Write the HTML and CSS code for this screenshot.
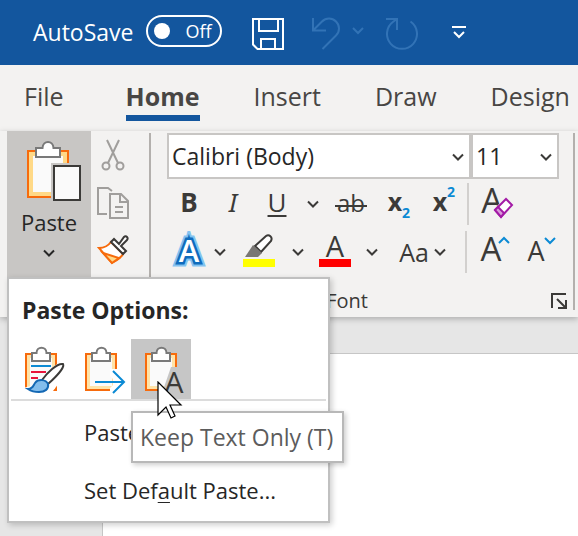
FILE: index.html
```html
<!DOCTYPE html>
<html lang="en">
<head>
    <meta charset="UTF-8">
    <meta name="viewport" content="width=device-width, initial-scale=1.0">
    <title>Document</title>
    <link rel="stylesheet" href="styles.css">
</head>
<body>
    <svg class="defs" width="0" height="0">
        <symbol id="chevron" viewBox="0 0 12 8"><path d="M1 1.5l5 5 5-5" fill="none" stroke="currentColor" stroke-width="2"/></symbol>
        <symbol id="clipboard" viewBox="0 0 60 60">
            <path d="M15 15h30v36H15z" fill="#fafafa" stroke="#f76b0c" stroke-width="2"/>
            <path d="M17.500 17.500h25v31h-25z" fill="none" stroke="#ffe3a8" stroke-width="3"/>
            <path d="M21 14h4.500c0-7 10-7 10 0H39v8H21z" fill="#fff" stroke="#797979" stroke-width="2"/>
        </symbol>
    </svg>

    <header class="titlebar">
        <label for="autosave">AutoSave</label>
        <label class="switch"><input type="checkbox" id="autosave">Off</label>
        <button class="save" aria-label="Save">
            <svg width="32" height="32" fill="none" stroke="currentColor" stroke-width="2"><path d="M1 1h30v30H5.500L1 26.500zM7 1v12h19V1M9 31V21h14v10"/></svg>
        </button>
        <button class="undo" aria-label="Undo" disabled>
            <svg width="54" height="34" fill="none" stroke="currentColor" stroke-width="2"><path d="M1 1v12.500h13M1.500 13L10 4.500c4-4 10-4 14 0s4 10 0 14L10.500 32M41 11l5 5 5-5"/></svg>
        </button>
        <button class="redo" aria-label="Redo" disabled>
            <svg width="32" height="34" fill="none" stroke="currentColor" stroke-width="2"><path d="M0 2h11v11M24.500 4.500a15 15 0 1 1-17 0L11 2"/></svg>
        </button>
        <button aria-label="Customize Quick Access Toolbar">
            <svg width="14" height="14" fill="none" stroke="currentColor" stroke-width="2"><path d="M0 2h14M2 7l5 5 5-5"/></svg>
        </button>
    </header>

    <nav class="tabs">
        <a href="#" class="file">File</a>
        <a href="#" class="active">Home</a>
        <a href="#">Insert</a>
        <a href="#">Draw</a>
        <a href="#">Design</a>
    </nav>

    <section class="ribbon">
        <div class="clipboard-group">
            <button class="paste">
                <svg width="56" height="62">
                    <path d="M1 11h40v46H1z" fill="#fafafa" stroke="#f76b0c" stroke-width="2"/>
                    <path d="M4 14h34v40H4z" fill="none" stroke="#ffd987" stroke-width="4"/>
                    <path d="M9 8h6.500C16 0 26 0 26.500 8H33v9H9z" fill="#fff" stroke="#797979" stroke-width="2"/>
                    <path d="M24 23h32v39H24z" fill="#c8c6c4"/>
                    <path d="M27 26h26v34H27z" fill="#fafafa" stroke="#3b3a38" stroke-width="2"/>
                </svg>
                <span>Paste</span>
                <svg class="chevron"><use href="#chevron"/></svg>
            </button>

            <div class="paste-menu">
                <h2>Paste Options:</h2>
                <div class="options">
                    <button aria-label="Keep Source Formatting">
                        <svg width="60" height="60">
                            <use href="#clipboard"/>
                            <path d="M20 27h20" stroke="#0b8ad4" stroke-width="2"/>
                            <path d="M20 33h15M20 39h7" stroke="#e8153c" stroke-width="2"/>
                            <path d="M50 22L60 28 39 56 12 56 12 49 20 47 27 40z" fill="#fff"/>
                            <path d="M31 41C36 34 46 24 52 25c2 3-6 12-15 20z" fill="#fff" stroke="#3b3a38" stroke-width="2"/>
                            <path d="M17 50c5 0 5-3 7-6 3-4 11-4 13 1 1 5-3 8-9 8-4 0-8-1-11-3z" fill="#83bdec" stroke="#1468b4" stroke-width="2"/>
                        </svg>
                    </button>
                    <button aria-label="Merge Formatting">
                        <svg width="60" height="60">
                            <use href="#clipboard"/>
                            <path d="M39 30h9l8 14v14H39v-9l3-3v-6l-3-3z" fill="#fff"/>
                            <path d="M24 43h29M42 32l11 11-11 11" fill="none" stroke="#0b8ad4" stroke-width="2"/>
                        </svg>
                    </button>
                    <div class="option-hover">
                        <button aria-label="Keep Text Only" aria-describedby="tip">
                            <svg width="60" height="60">
                                <use href="#clipboard"/>
                                <path d="M40 28h8v26H31z" fill="#c6c6c6"/>
                                <text x="43" y="54" class="letter" font-size="30">A</text>
                            </svg>
                        </button>
                        <span class="tooltip" id="tip" role="tooltip">Keep Text Only (T)</span>
                        <svg class="cursor" width="26" height="40"><path d="M1 1v33l8-8 5 11 4-2-5-11h11z" fill="#fff" stroke="#000" stroke-width="1.200"/></svg>
                    </div>
                </div>
                <button class="item">Paste <u>S</u>pecial...</button>
                <button class="item">Set Def<u>a</u>ult Paste...</button>
            </div>
        </div>

        <div class="small-tools">
            <button aria-label="Cut">
                <svg width="32" height="32" fill="none" stroke="#a09e9c" stroke-width="2">
                    <path d="M10 1l11 23M22 1L11 24"/><circle cx="9" cy="27" r="3.500"/><circle cx="23" cy="27" r="3.500"/>
                </svg>
            </button>
            <button aria-label="Copy">
                <svg width="32" height="32" fill="none" stroke="#a09e9c" stroke-width="2">
                    <path d="M10 27H1V1h10l4 3M13 7h11l7 7v17H13zM23 7v8h8M18 20h8M18 25h8"/>
                </svg>
            </button>
            <button aria-label="Format Painter">
                <svg width="32" height="32" stroke-width="2">
                    <path d="M2 13c5 0 9-2 12-6l12 12c-2 4-6 6-11 9z" fill="#fff" stroke="#f76b0c"/>
                    <path d="M6 18l16 5-7 5z" fill="#ffd987" stroke="#f76b0c"/>
                    <path d="M14 7l3-3 5 5 5-7c2-2 5 1 3 3l-6 6 5 5-3 3z" fill="#fff" stroke="#3b3a38"/>
                </svg>
            </button>
        </div>

        <div class="font-group">
            <div class="combos">
                <div class="combo">
                    <select aria-label="Font"><option>Calibri (Body)</option></select>
                    <svg class="chevron"><use href="#chevron"/></svg>
                </div>
                <div class="combo size">
                    <select aria-label="Font size"><option>11</option></select>
                    <svg class="chevron"><use href="#chevron"/></svg>
                </div>
            </div>
            <div class="row">
                <button class="w44 glyph"><b>B</b></button>
                <button class="w44 glyph italic">I</button>
                <button class="w44 glyph underline">U</button>
                <button class="w28" aria-label="Underline style"><svg class="chevron"><use href="#chevron"/></svg></button>
                <button class="w48" aria-label="Strikethrough">
                    <svg width="32" height="42"><text x="16" y="29" class="letter" font-size="24">ab</text><path d="M0 23h32" stroke="#3b3a38" stroke-width="2"/></svg>
                </button>
                <button class="w48" aria-label="Subscript">
                    <svg width="28" height="42"><text x="10" y="28" class="letter bold" font-size="25">x</text><text x="21" y="35" class="letter blue" font-size="14">2</text></svg>
                </button>
                <button class="w44" aria-label="Superscript">
                    <svg width="28" height="42"><text x="9" y="28" class="letter bold" font-size="25">x</text><text x="20" y="14" class="letter blue" font-size="14">2</text></svg>
                </button>
                <span class="line"></span>
                <button class="w56" aria-label="Clear All Formatting">
                    <svg width="34" height="42">
                        <text x="12" y="30" class="letter" font-size="34">A</text>
                        <path d="M12 28L26 14l7 6-14 16z" fill="#f3f2f1"/>
                        <path d="M15 27l11-11 6 6-11 12z" fill="#fff" stroke="#a31ba6" stroke-width="2"/>
                        <path d="M15 27l3-3 6 6-3 4z" fill="#da9bdb" stroke="#a31ba6" stroke-width="2"/>
                    </svg>
                </button>
            </div>
            <div class="row">
                <button class="w44" aria-label="Text Effects">
                    <svg width="40" height="42">
                        <text x="20" y="31" class="effect outer">A</text>
                        <text x="20" y="31" class="effect inner">A</text>
                    </svg>
                </button>
                <button class="w18" aria-label="More text effects"><svg class="chevron"><use href="#chevron"/></svg></button>
                <button class="w60" aria-label="Text Highlight Color">
                    <svg width="32" height="42">
                        <path d="M12 15L23 5c3-2 7 1 5 5L18 21z" fill="#fff" stroke="#3b3a38" stroke-width="2"/>
                        <path d="M10 14l9 8-4 4H2z" fill="#797774"/>
                        <path d="M0 28h32v8H0z" fill="#ff0"/>
                    </svg>
                </button>
                <button class="w18" aria-label="More highlight colors"><svg class="chevron"><use href="#chevron"/></svg></button>
                <button class="w56" aria-label="Font Color">
                    <svg width="32" height="42"><text x="16" y="26" class="letter" font-size="29">A</text><path d="M0 28h32v8H0z" fill="#f00"/></svg>
                </button>
                <button class="w18" aria-label="More font colors"><svg class="chevron"><use href="#chevron"/></svg></button>
                <button class="w48 case">Aa</button>
                <button class="w36 left" aria-label="Change Case"><svg class="chevron"><use href="#chevron"/></svg></button>
                <span class="line"></span>
                <button class="w56" aria-label="Increase Font Size">
                    <svg width="32" height="42" fill="none"><text x="12" y="30" class="letter" font-size="33">A</text><path d="M20 12l5-5 5 5" stroke="#0b8ad4" stroke-width="2"/></svg>
                </button>
                <button class="w36" aria-label="Decrease Font Size">
                    <svg width="30" height="42" fill="none"><text x="10" y="30" class="letter" font-size="27">A</text><path d="M19 7l5 5 5-5" stroke="#0b8ad4" stroke-width="2"/></svg>
                </button>
            </div>
            <div class="caption">
                <span>Font</span>
                <button aria-label="Font Settings"><svg width="16" height="16" fill="none" stroke="currentColor" stroke-width="2"><path d="M1 15V1h14M6 6l9 9M15 7v8H7"/></svg></button>
            </div>
        </div>
    </section>

    <main class="workspace">
        <div class="page"></div>
    </main>
</body>
</html>
```

FILE: styles.css
```css
* {
    box-sizing: border-box;
}
body {
    margin: 0;
    min-height: 100vh;
    display: flex;
    flex-direction: column;
    overflow: hidden;
    background-color: #e6e6e6;
    color: #3b3a38;
    font-family: "Open Sans", "Noto Sans", sans-serif;
    font-size: 23px;
}
button {
    display: flex;
    align-items: center;
    justify-content: center;
    padding: 0;
    border: none;
    background: none;
    color: inherit;
    font: inherit;
}
svg {
    display: block;
}
.defs {
    position: absolute;
}
.chevron {
    width: 12px;
    height: 8px;
    flex: none;
}

/* title bar */
.titlebar {
    display: flex;
    align-items: center;
    height: 65px;
    padding: 0 0 2px 33px;
    background-color: #13569e;
    color: #fff;
}
.switch {
    display: flex;
    align-items: center;
    gap: 15px;
    width: 76px;
    height: 32px;
    margin: 0 30px 2px 13px;
    padding-left: 6px;
    border: 2px solid #fff;
    border-radius: 16px;
    font-size: 18px;
}
.switch input {
    appearance: none;
    width: 16px;
    height: 16px;
    margin: 0;
    border-radius: 50%;
    background-color: #fff;
}
.save,
.undo,
.redo {
    margin-top: 4px;
}
.save {
    margin-right: 28px;
}
.undo {
    margin-right: 20px;
}
.redo {
    margin-right: 34px;
}
.titlebar button:disabled {
    color: #3273b6;
}

/* tabs */
.tabs {
    display: flex;
    gap: 54px;
    height: 66px;
    padding: 11px 24px 0;
    background-color: #f3f2f1;
    font-size: 25px;
}
.tabs a {
    height: 45px;
    line-height: 40px;
    color: #484644;
    text-decoration: none;
}
.tabs .file {
    margin-right: 8px;
}
.tabs .active {
    border-bottom: 6px solid #13569e;
    font-weight: 700;
}

/* ribbon */
.ribbon {
    display: flex;
    height: 186px;
    padding: 0 3px 0 7px;
    background-color: #f3f2f1;
    box-shadow: 0 2px 6px rgba(0, 0, 0, 0.25);
}
.clipboard-group {
    position: relative;
    width: 84px;
}
.paste {
    flex-direction: column;
    justify-content: flex-start;
    width: 100%;
    height: 148px;
    padding-top: 9px;
    background-color: #c8c6c4;
    color: #262626;
    font-size: 22px;
}
.paste svg:first-child {
    margin-left: 12px;
}
.paste span {
    margin: 5px 0 12px;
}
.small-tools {
    display: flex;
    flex-direction: column;
    gap: 16px;
    height: 177px;
    margin-top: 2px;
    padding: 6px 20px 0 6px;
    border-right: 2px solid #b3b0ad;
}
.font-group {
    flex: 1;
    height: 177px;
    margin-top: 2px;
    padding: 0 14px 0 16px;
    border-right: 2px solid #b3b0ad;
}
.combos {
    display: flex;
    margin-bottom: 4px;
}
.combo {
    position: relative;
    flex: 1;
}
.combo.size {
    flex: 0 0 88px;
}
.combo select {
    appearance: none;
    width: 100%;
    height: 46px;
    padding: 0 3px;
    border: 2px solid #c8c6c4;
    border-radius: 0;
    background-color: #fff;
    color: #262626;
    font: inherit;
}
.combo .chevron {
    position: absolute;
    right: 7px;
    top: 20px;
    pointer-events: none;
}
.row {
    display: flex;
    height: 42px;
    margin-bottom: 6px;
    font-size: 26px;
}
.line {
    width: 2px;
    background-color: #d2d0ce;
}
.w18 { width: 18px; }
.w28 { width: 28px; }
.w36 { width: 36px; }
.w44 { width: 44px; }
.w48 { width: 48px; }
.w56 { width: 56px; }
.w60 { width: 60px; }
.glyph {
    padding-bottom: 5px;
}
.left {
    justify-content: flex-start;
    padding-left: 5px;
}
.italic {
    font-family: "Noto Sans", sans-serif;
    font-style: italic;
}
.underline {
    text-decoration: underline;
    text-decoration-thickness: 2px;
    text-underline-offset: 3px;
}
.case {
    justify-content: flex-end;
    font-size: 25px;
}
.letter {
    fill: #3b3a38;
    text-anchor: middle;
}
.letter.bold {
    font-weight: 700;
}
.letter.blue {
    fill: #0b8ad4;
    font-weight: 700;
}
.effect {
    font-size: 31px;
    font-weight: 600;
    text-anchor: middle;
    fill: #fff;
    paint-order: stroke;
}
.outer {
    stroke: #83c3f0;
    stroke-width: 9px;
}
.inner {
    stroke: #0f6cbd;
    stroke-width: 5px;
}
.caption {
    display: flex;
    align-items: center;
    gap: 16px;
    margin: 14px -8px 0 0;
    font-size: 20px;
    line-height: 28px;
}
.caption span {
    flex: 1;
    padding-right: 8px;
    text-align: center;
}

/* paste menu */
.paste-menu {
    position: absolute;
    top: 146px;
    left: 0;
    z-index: 1;
    width: 323px;
    padding: 13px 2px 2px;
    border: 2px solid #c0c0c0;
    background-color: #fff;
    box-shadow: 2px 2px 6px rgba(0, 0, 0, 0.2);
    color: #262626;
}
.paste-menu h2 {
    margin: 0 0 11px;
    padding-left: 11px;
    font-size: 23px;
    line-height: 36px;
}
.options {
    display: flex;
    margin-bottom: 2px;
    border-bottom: 2px solid #dcdcdc;
}
.option-hover {
    position: relative;
    background-color: #c6c6c6;
}
.tooltip {
    position: absolute;
    top: 72px;
    left: 0;
    padding: 0 9px 0 7px;
    border: 2px solid #b8b8b8;
    background-color: #fff;
    box-shadow: 2px 2px 5px rgba(0, 0, 0, 0.2);
    color: #5c5c5c;
    line-height: 48px;
    white-space: nowrap;
}
.cursor {
    position: absolute;
    top: 42px;
    left: 26px;
}
.item {
    justify-content: flex-start;
    width: 100%;
    height: 58px;
    padding-left: 73px;
    font-size: 22px;
    white-space: pre;
}
.item u {
    text-decoration-thickness: 1px;
    text-underline-offset: 3px;
}

/* document */
.workspace {
    flex: 1;
    display: flex;
    padding: 36px 0 0 102px;
}
.page {
    flex: 1;
    border: 1px solid #c6c6c6;
    border-width: 1px 0 0 1px;
    background-color: #fff;
}
```
